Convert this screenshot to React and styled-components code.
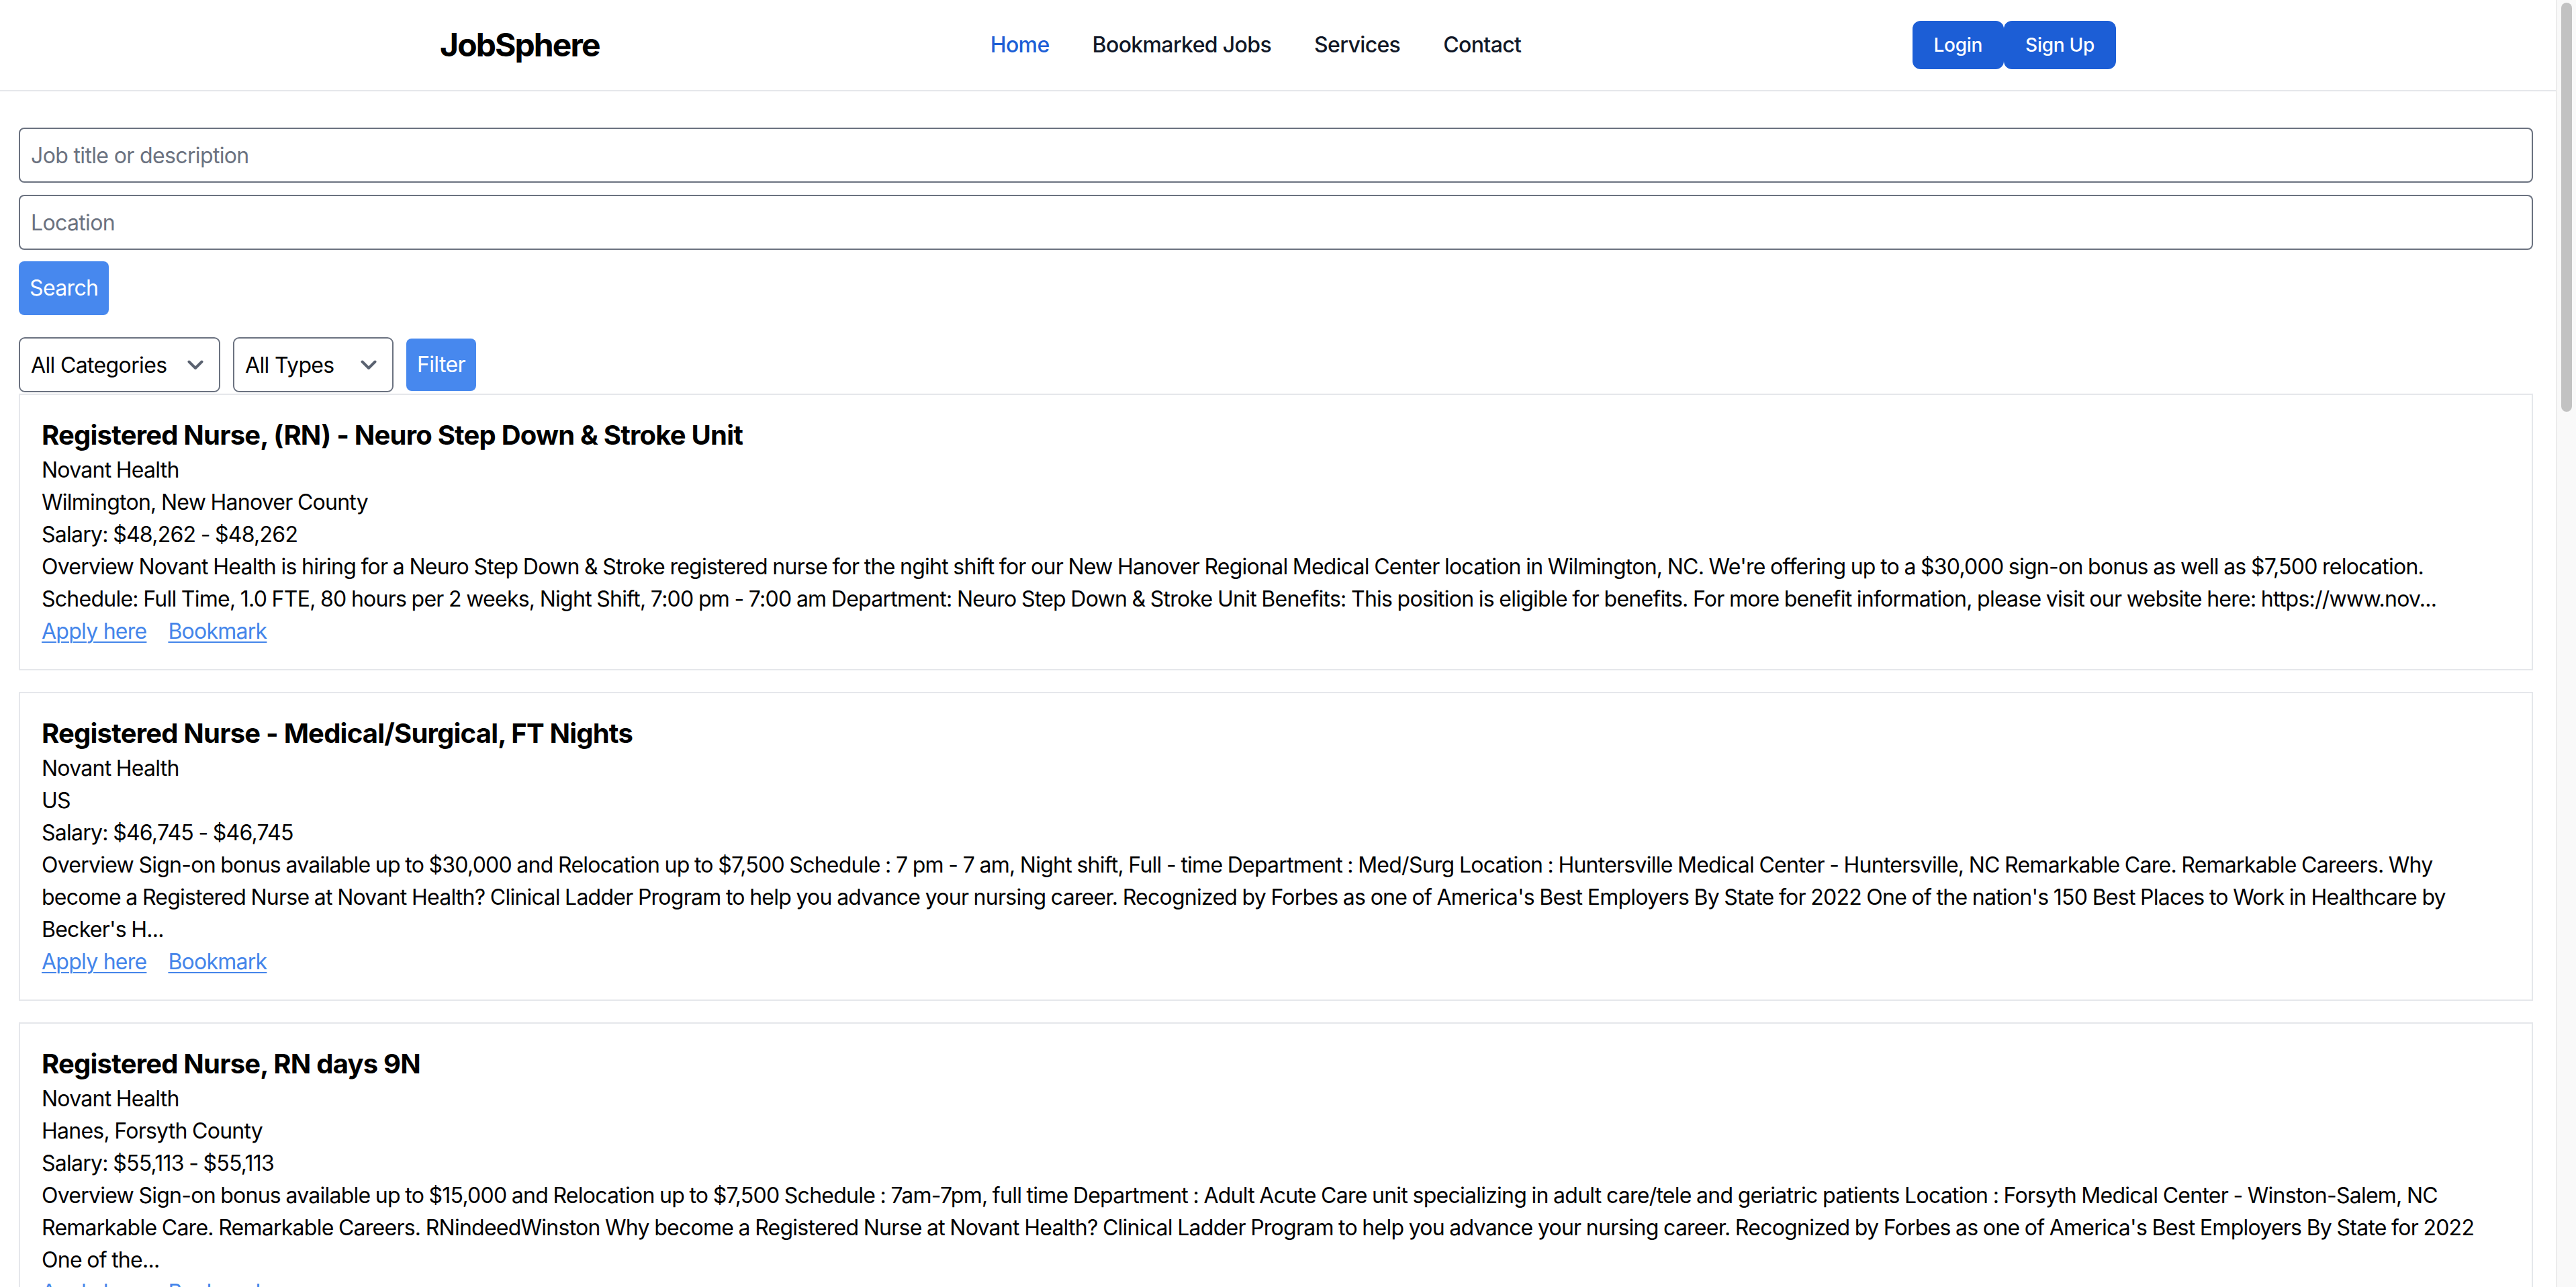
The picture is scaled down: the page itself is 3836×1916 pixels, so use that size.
import React from 'react';
import styled, { createGlobalStyle } from 'styled-components';

const GlobalStyle = createGlobalStyle`
  * { box-sizing: border-box; }
  html, body {
    margin: 0;
    padding: 0;
    background: #fff;
  }
  body {
    font-family: Inter, "Noto Sans", "Liberation Sans", sans-serif;
    letter-spacing: -0.015em;
    color: #000;
  }
`;

const jobs = [
  {
    id: 1,
    title: 'Registered Nurse, (RN) - Neuro Step Down & Stroke Unit',
    company: 'Novant Health',
    location: 'Wilmington, New Hanover County',
    salary: '$48,262 - $48,262',
    description:
      "Overview Novant Health is hiring for a Neuro Step Down & Stroke registered nurse for the ngiht shift for our New Hanover Regional Medical Center location in Wilmington, NC. We're offering up to a $30,000 sign-on bonus as well as $7,500 relocation. Schedule: Full Time, 1.0 FTE, 80 hours per 2 weeks, Night Shift, 7:00 pm - 7:00 am Department: Neuro Step Down & Stroke Unit Benefits: This position is eligible for benefits. For more benefit information, please visit our website here: https://www.nov...",
  },
  {
    id: 2,
    title: 'Registered Nurse - Medical/Surgical, FT Nights',
    company: 'Novant Health',
    location: 'US',
    salary: '$46,745 - $46,745',
    description:
      "Overview Sign-on bonus available up to $30,000 and Relocation up to $7,500 Schedule : 7 pm - 7 am, Night shift, Full - time Department : Med/Surg Location : Huntersville Medical Center - Huntersville, NC Remarkable Care. Remarkable Careers. Why become a Registered Nurse at Novant Health? Clinical Ladder Program to help you advance your nursing career. Recognized by Forbes as one of America's Best Employers By State for 2022 One of the nation's 150 Best Places to Work in Healthcare by Becker's H...",
  },
  {
    id: 3,
    title: 'Registered Nurse, RN days 9N',
    company: 'Novant Health',
    location: 'Hanes, Forsyth County',
    salary: '$55,113 - $55,113',
    description:
      "Overview Sign-on bonus available up to $15,000 and Relocation up to $7,500 Schedule : 7am-7pm, full time Department : Adult Acute Care unit specializing in adult care/tele and geriatric patients Location : Forsyth Medical Center - Winston-Salem, NC Remarkable Care. Remarkable Careers. RNindeedWinston Why become a Registered Nurse at Novant Health? Clinical Ladder Program to help you advance your nursing career. Recognized by Forbes as one of America's Best Employers By State for 2022 One of the...",
  },
  {
    id: 4,
    title: 'Registered Nurse, RN - Cardiac Telemetry, Nights',
    company: 'Novant Health',
    location: 'Charlotte, Mecklenburg County',
    salary: '$52,410 - $52,410',
    description:
      "Overview Sign-on bonus available up to $20,000 and Relocation up to $7,500 Schedule : 7 pm - 7 am, Night shift, Full - time Department : Cardiac Telemetry Location : Presbyterian Medical Center - Charlotte, NC Remarkable Care. Remarkable Careers. Why become a Registered Nurse at Novant Health? Clinical Ladder Program to help you advance your nursing career...",
  },
  {
    id: 5,
    title: 'Registered Nurse - Emergency Department, FT Days',
    company: 'Novant Health',
    location: 'Matthews, Mecklenburg County',
    salary: '$50,980 - $50,980',
    description:
      "Overview Sign-on bonus available up to $15,000 and Relocation up to $7,500 Schedule : 7am-7pm, full time Department : Emergency Department Location : Matthews Medical Center - Matthews, NC Remarkable Care. Remarkable Careers. Why become a Registered Nurse at Novant Health? Clinical Ladder Program to help you advance your nursing career...",
  },
  {
    id: 6,
    title: 'Registered Nurse, RN - Intensive Care Unit',
    company: 'Novant Health',
    location: 'Salisbury, Rowan County',
    salary: '$53,220 - $53,220',
    description:
      "Overview Sign-on bonus available up to $30,000 and Relocation up to $7,500 Schedule : 7 pm - 7 am, Night shift, Full - time Department : ICU Location : Rowan Medical Center - Salisbury, NC Remarkable Care. Remarkable Careers. Why become a Registered Nurse at Novant Health? Clinical Ladder Program to help you advance your nursing career...",
  },
  {
    id: 7,
    title: 'Registered Nurse - Labor & Delivery, PRN',
    company: 'Novant Health',
    location: 'Kernersville, Forsyth County',
    salary: '$49,870 - $49,870',
    description:
      "Overview Novant Health is hiring for a Labor & Delivery registered nurse for our Kernersville Medical Center location. Schedule: PRN, 12 hour shifts, Days and Nights Department: Labor & Delivery Benefits: This position is eligible for benefits. For more benefit information, please visit our website here: https://www.nov...",
  },
  {
    id: 8,
    title: 'Registered Nurse, RN - Oncology, FT Days',
    company: 'Novant Health',
    location: 'Winston-Salem, Forsyth County',
    salary: '$54,300 - $54,300',
    description:
      "Overview Sign-on bonus available up to $15,000 and Relocation up to $7,500 Schedule : 7am-7pm, full time Department : Oncology Location : Forsyth Medical Center - Winston-Salem, NC Remarkable Care. Remarkable Careers. Why become a Registered Nurse at Novant Health? Clinical Ladder Program to help you advance your nursing career...",
  },
  {
    id: 9,
    title: 'Registered Nurse - Operating Room, FT',
    company: 'Novant Health',
    location: 'Huntersville, Mecklenburg County',
    salary: '$56,015 - $56,015',
    description:
      "Overview Sign-on bonus available up to $20,000 and Relocation up to $7,500 Schedule : Full time, Days with call Department : Surgical Services Location : Huntersville Medical Center - Huntersville, NC Remarkable Care. Remarkable Careers. Why become a Registered Nurse at Novant Health? Clinical Ladder Program to help you advance your nursing career...",
  },
  {
    id: 10,
    title: 'Registered Nurse, RN - Progressive Care Unit',
    company: 'Novant Health',
    location: 'Thomasville, Davidson County',
    salary: '$48,900 - $48,900',
    description:
      "Overview Sign-on bonus available up to $15,000 and Relocation up to $7,500 Schedule : 7 pm - 7 am, Night shift, Full - time Department : PCU Location : Thomasville Medical Center - Thomasville, NC Remarkable Care. Remarkable Careers. Why become a Registered Nurse at Novant Health? Clinical Ladder Program to help you advance your nursing career...",
  },
];

const Page = styled.div`
  margin-right: 30px;
`;

/* stand-in for the browser's scrollbar, which headless capture hides */
const ScrollTrack = styled.div`
  position: fixed;
  top: 0;
  right: 0;
  bottom: 0;
  width: 30px;
  background: #f9f9f9;
  border-left: 2px solid #ececec;
`;

const ScrollThumb = styled.div`
  margin: 4px 0 0 6px;
  width: 16px;
  height: 609px;
  border-radius: 8px;
  background: #c2c2c2;
`;

const Header = styled.header`
  border-bottom: 2px solid #e5e7eb;
  padding: 31px 0;
  background: #fff;
`;

const HeaderInner = styled.div`
  width: 2496px;
  margin: 0 auto;
  display: flex;
  align-items: center;
  justify-content: space-between;
`;

const Logo = styled.div`
  font-size: 48px;
  line-height: 64px;
  font-weight: 700;
  letter-spacing: -0.04em;
  color: #000;
`;

const Nav = styled.nav`
  display: flex;
  gap: 64px;
`;

const NavLink = styled.a`
  font-size: 32px;
  line-height: 48px;
  font-weight: 500;
  letter-spacing: -0.02em;
  text-decoration: none;
  color: ${(p) => (p.$active ? '#1d5fd6' : '#111827')};
`;

const AuthGroup = styled.div`
  display: flex;
`;

const AuthButton = styled.button`
  font-family: inherit;
  font-size: 28px;
  line-height: 40px;
  font-weight: 500;
  letter-spacing: -0.01em;
  color: #fff;
  background: #1c5ed6;
  border: none;
  border-radius: 12px;
  padding: 16px 32px;
`;

const Main = styled.main`
  padding: 54px 34px 40px 28px;
`;

const TextInput = styled.input`
  display: block;
  width: 100%;
  height: 82px;
  margin-bottom: 18px;
  padding: 0 16px;
  font-family: inherit;
  font-size: 32px;
  letter-spacing: -0.02em;
  color: #000;
  border: 2px solid #6b7280;
  border-radius: 8px;
  outline: none;
  &::placeholder {
    color: #6b7280;
  }
`;

const BlueButton = styled.button`
  font-family: inherit;
  font-size: 32px;
  line-height: 48px;
  letter-spacing: -0.02em;
  color: #fff;
  background: #4788ee;
  border: none;
  border-radius: 8px;
  padding: ${(p) => (p.$compact ? '15px 16px' : '16px 16px')};
`;

const SearchRow = styled.div`
  margin-top: -1px;
  margin-bottom: 33px;
  display: flex;
`;

const FilterRow = styled.div`
  display: flex;
  align-items: center;
  gap: 19px;
  margin-bottom: 2px;
`;

const SelectWrap = styled.div`
  position: relative;
  width: ${(p) => p.$width}px;
`;

const Select = styled.select`
  appearance: none;
  -webkit-appearance: none;
  width: 100%;
  height: 82px;
  padding: 0 60px 0 16px;
  font-family: inherit;
  font-size: 32px;
  letter-spacing: -0.02em;
  color: #000;
  background: #fff;
  border: 2px solid #6b7280;
  border-radius: 9px;
  outline: none;
`;

const Chevron = styled.svg`
  position: absolute;
  right: 25px;
  top: 50%;
  margin-top: -7px;
  width: 24px;
  height: 15px;
  pointer-events: none;
`;

const JobList = styled.div`
  display: flex;
  flex-direction: column;
  gap: 32px;
`;

const JobCard = styled.article`
  border: 2px solid #e5e7eb;
  padding: 32px;
  background: #fff;
`;

const JobTitle = styled.h2`
  margin: 0;
  font-size: 40px;
  line-height: 56px;
  font-weight: 700;
  letter-spacing: -0.0197em;
  color: #000;
`;

const JobLine = styled.p`
  margin: 0;
  font-size: 32px;
  line-height: 48px;
  letter-spacing: -0.75px;
  word-spacing: -0.83px;
  color: #000;
`;

const LinkRow = styled.div`
  display: flex;
  gap: 32px;
  font-size: 32px;
  line-height: 48px;
  letter-spacing: -0.75px;
`;

const CardLink = styled.a`
  color: #4485ea;
  text-decoration: underline;
  text-decoration-thickness: 2px;
  text-underline-offset: 4px;
`;

const ChevronIcon = () => (
  <Chevron viewBox="0 0 24 15" fill="none">
    <path d="M2.5 2.5 L12 12 L21.5 2.5" stroke="#5a6270" strokeWidth="4" strokeLinecap="round" strokeLinejoin="round" />
  </Chevron>
);

const App = () => {
  return (
    <>
      <GlobalStyle />
      <Page>
        <Header>
          <HeaderInner>
            <Logo>JobSphere</Logo>
            <Nav>
              <NavLink href="#" $active>Home</NavLink>
              <NavLink href="#">Bookmarked Jobs</NavLink>
              <NavLink href="#">Services</NavLink>
              <NavLink href="#">Contact</NavLink>
            </Nav>
            <AuthGroup>
              <AuthButton>Login</AuthButton>
              <AuthButton>Sign Up</AuthButton>
            </AuthGroup>
          </HeaderInner>
        </Header>

        <Main>
          <form onSubmit={(e) => e.preventDefault()}>
            <TextInput placeholder="Job title or description" />
            <TextInput placeholder="Location" />
            <SearchRow>
              <BlueButton type="submit">Search</BlueButton>
            </SearchRow>
          </form>

          <FilterRow>
            <SelectWrap $width={300}>
              <Select defaultValue="">
                <option value="">All Categories</option>
              </Select>
              <ChevronIcon />
            </SelectWrap>
            <SelectWrap $width={239}>
              <Select defaultValue="">
                <option value="">All Types</option>
              </Select>
              <ChevronIcon />
            </SelectWrap>
            <BlueButton $compact>Filter</BlueButton>
          </FilterRow>

          <JobList>
            {jobs.map((job) => (
              <JobCard key={job.id}>
                <JobTitle>{job.title}</JobTitle>
                <JobLine>{job.company}</JobLine>
                <JobLine>{job.location}</JobLine>
                <JobLine>Salary: {job.salary}</JobLine>
                <JobLine>{job.description}</JobLine>
                <LinkRow>
                  <CardLink href="#">Apply here</CardLink>
                  <CardLink href="#">Bookmark</CardLink>
                </LinkRow>
              </JobCard>
            ))}
          </JobList>
        </Main>
      </Page>
      <ScrollTrack>
        <ScrollThumb />
      </ScrollTrack>
    </>
  );
};

export default App;
